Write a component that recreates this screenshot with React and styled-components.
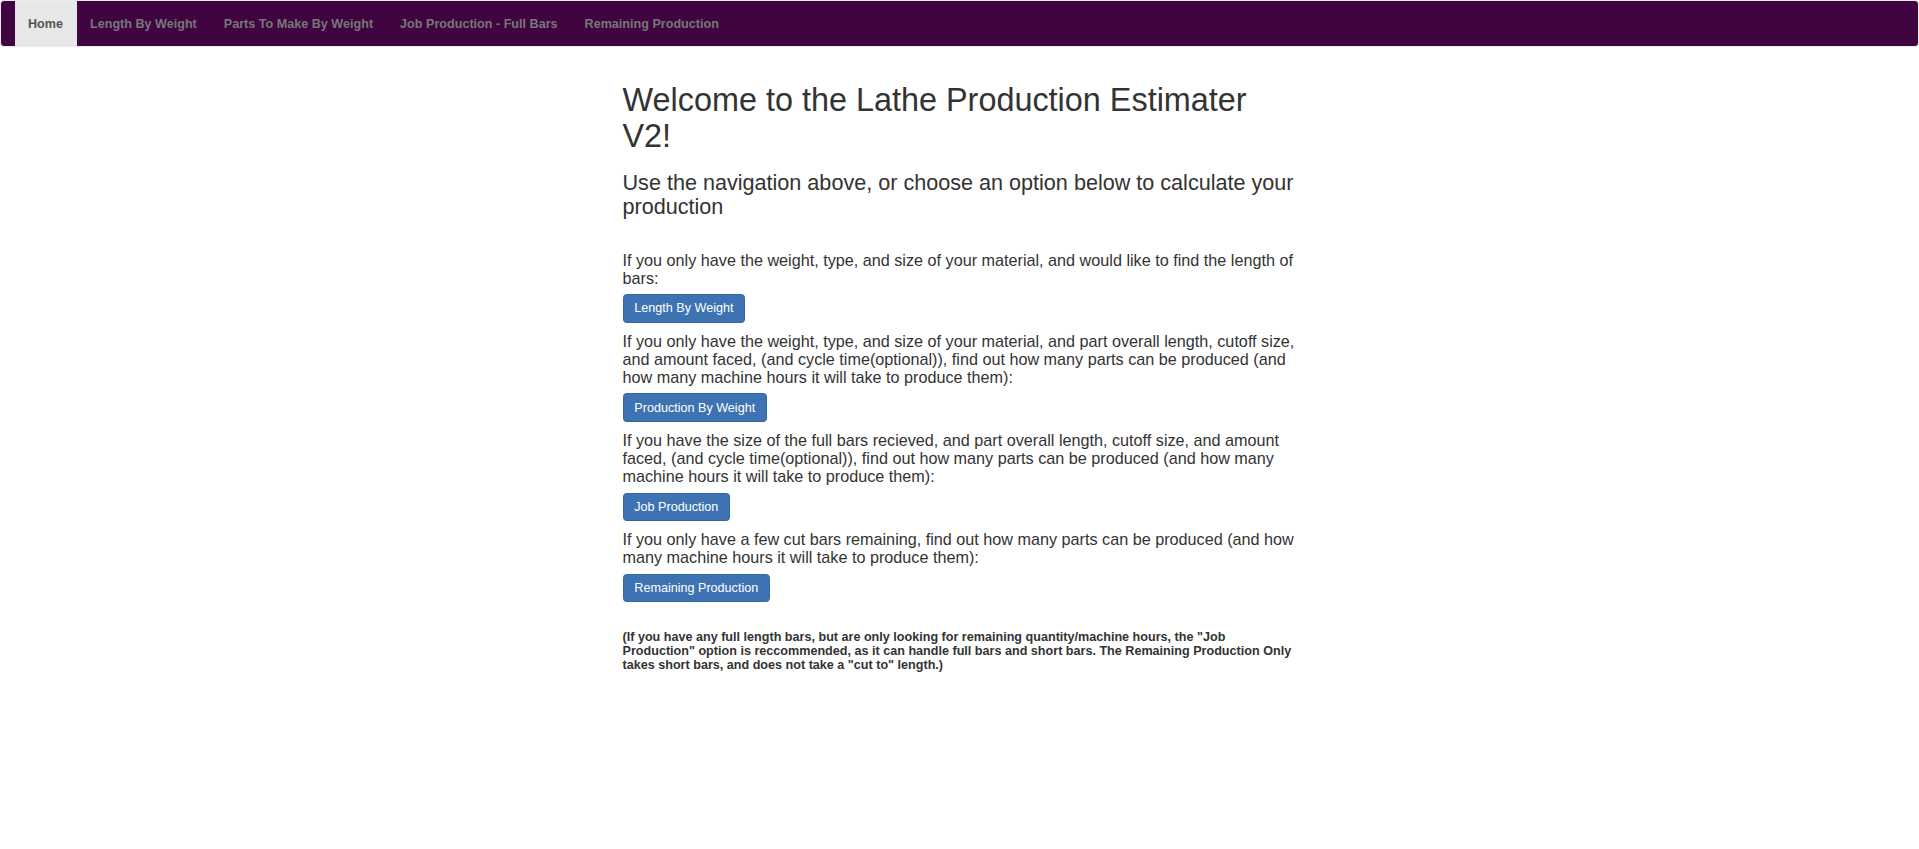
import React from "react";
import styled, { createGlobalStyle } from "styled-components";

const Global = createGlobalStyle`
  html, body { margin: 0; padding: 0; background: #fff; }
  body {
    font-family: "Liberation Sans", Arial, Helvetica, sans-serif;
    font-size: 12.6px;
    line-height: 18px;
    color: #333;
  }
  * { box-sizing: border-box; }
`;

const Navbar = styled.nav`
  display: flex;
  align-items: stretch;
  height: 47px;
  background: #400440;
  border: 1px solid #ececec;
  border-radius: 4px;
  padding: 0 13.5px;
  margin: 0;
`;

const NavList = styled.ul`
  display: flex;
  list-style: none;
  margin: 0;
  padding: 0;
`;

const NavLink = styled.a`
  display: flex;
  align-items: center;
  height: 45px;
  padding: 0 13.5px;
  font-size: 12.6px;
  font-weight: bold;
  text-decoration: none;
  color: ${(p) => (p.$active ? "#555" : "#777")};
  background: ${(p) => (p.$active ? "#e7e7e7" : "transparent")};
  cursor: pointer;
`;

const Main = styled.main`
  width: 674px;
  margin: 0 auto;
  padding-top: 36px;
`;

const Title = styled.h1`
  margin: 0;
  font-size: 32.4px;
  line-height: 35.64px;
  font-weight: 500;
  color: #333;
`;

const Subtitle = styled.h3`
  margin: 17px 0 0;
  font-size: 21.6px;
  line-height: 23.76px;
  font-weight: 500;
  color: #333;
`;

const Options = styled.section`
  display: flex;
  flex-direction: column;
  align-items: flex-start;
  margin-top: 31.7px;
`;

const Text = styled.p`
  margin: 0 0 7px;
  font-size: 16.2px;
  line-height: 18.2px;
`;

const Button = styled.a`
  display: inline-block;
  margin-bottom: 9px;
  padding: 4.35px 10.8px;
  font-size: 12.6px;
  line-height: 18px;
  color: #fff;
  background: #3d73b3;
  border: 0.9px solid #32679f;
  border-radius: 3.6px;
  text-decoration: none;
  white-space: nowrap;
  cursor: pointer;
`;

const Note = styled.h5`
  margin: 20px 0 0;
  font-size: 12.6px;
  line-height: 13.86px;
  font-weight: bold;
  color: #333;
`;

const navItems = [
  "Home",
  "Length By Weight",
  "Parts To Make By Weight",
  "Job Production - Full Bars",
  "Remaining Production",
];

const options = [
  {
    text: "If you only have the weight, type, and size of your material, and would like to find the length of bars:",
    button: "Length By Weight",
  },
  {
    text: "If you only have the weight, type, and size of your material, and part overall length, cutoff size, and amount faced, (and cycle time(optional)), find out how many parts can be produced (and how many machine hours it will take to produce them):",
    button: "Production By Weight",
  },
  {
    text: "If you have the size of the full bars recieved, and part overall length, cutoff size, and amount faced, (and cycle time(optional)), find out how many parts can be produced (and how many machine hours it will take to produce them):",
    button: "Job Production",
  },
  {
    text: "If you only have a few cut bars remaining, find out how many parts can be produced (and how many machine hours it will take to produce them):",
    button: "Remaining Production",
  },
];

export default function App() {
  return (
    <>
      <Global />
      <Navbar>
        <NavList>
          {navItems.map((item, i) => (
            <li key={item}>
              <NavLink $active={i === 0}>{item}</NavLink>
            </li>
          ))}
        </NavList>
      </Navbar>
      <Main>
        <Title>Welcome to the Lathe Production Estimater V2!</Title>
        <Subtitle>
          Use the navigation above, or choose an option below to calculate your
          production
        </Subtitle>
        <Options>
          {options.map((o) => (
            <React.Fragment key={o.button}>
              <Text>{o.text}</Text>
              <Button>{o.button}</Button>
            </React.Fragment>
          ))}
          <Note>
            (If you have any full length bars, but are only looking for
            remaining quantity/machine hours, the "Job Production" option is
            reccommended, as it can handle full bars and short bars. The
            Remaining Production Only takes short bars, and does not take a
            "cut to" length.)
          </Note>
        </Options>
      </Main>
    </>
  );
}
